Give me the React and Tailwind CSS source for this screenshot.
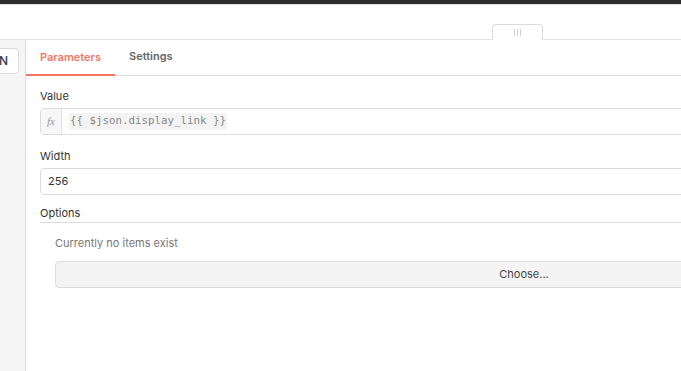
import React from "react";

const Label = ({ children }) => (
  <div className="text-[11px] leading-[16px] text-[#333] mb-[4px]">{children}</div>
);

const App = () => {
  return (
    <div
      className="w-full h-[371px] overflow-hidden bg-white flex flex-col"
      style={{ fontFamily: "Inter, 'Liberation Sans', sans-serif" }}
    >
      <div className="h-[4px] bg-[#2e2e2e] shrink-0" />
      <div className="h-[36px] shrink-0 border-t border-b border-[#e0e0e0] flex items-end pl-[492px]">
        <div className="w-[51px] h-[16px] mb-[-1px] bg-white border border-b-0 border-[#dcdcdc] rounded-t-[4px] flex items-center justify-center gap-[2px]">
          <div className="w-px h-[7px] bg-[#d0d0d0]" />
          <div className="w-px h-[7px] bg-[#d0d0d0]" />
          <div className="w-px h-[7px] bg-[#d0d0d0]" />
        </div>
      </div>

      <div className="flex flex-1 min-h-0">
        <div className="w-[26px] shrink-0 bg-[#f5f5f5] border-r border-[#dcdcdc] pt-[8px] overflow-hidden">
          <div className="w-[40px] ml-[-21px] h-[26px] bg-white border border-[#dcdcdc] rounded-[4px] flex items-center pl-[19px]">
            <span className="text-[12px] font-medium text-[#2d3a4f]">N</span>
          </div>
        </div>

        <div className="w-[996px] shrink-0 flex flex-col">
          <div className="h-[36px] flex items-stretch border-b border-[#dcdcdc]">
            <div className="px-[14px] flex items-center border-b-2 border-[#f47561] mb-[-1px]">
              <span className="text-[11px] font-semibold text-[#f47561]">Parameters</span>
            </div>
            <div className="px-[14px] flex items-center pb-[3px]">
              <span className="text-[11px] font-semibold text-[#666]">Settings</span>
            </div>
          </div>

          <div className="px-[14px] pt-[12px]">
            <Label>Value</Label>
            <div className="h-[27px] flex border border-[#dcdcdc] rounded-[4px] overflow-hidden">
              <div className="w-[21px] shrink-0 bg-[#f7f7f7] border-r border-[#e3e3e3] flex items-center justify-center">
                <span
                  className="text-[11px] italic text-[#999]"
                  style={{ fontFamily: "'Liberation Serif', serif" }}
                >
                  fx
                </span>
              </div>
              <div className="flex items-center pl-[7px]">
                <span
                  className="text-[10.8px] text-[#888] bg-[#f3f3f3] px-[1px]"
                  style={{ fontFamily: "'DejaVu Sans Mono', monospace" }}
                >
                  {"{{ $json.display_link }}"}
                </span>
              </div>
            </div>

            <div className="mt-[13px]">
              <Label>Width</Label>
              <div className="h-[27px] flex items-center border border-[#dcdcdc] rounded-[4px] px-[7px]">
                <span className="text-[11px] text-[#333]">256</span>
              </div>
            </div>

            <div className="mt-[10px]">
              <div className="text-[11px] leading-[16px] text-[#333] pb-[1px] border-b border-[#dcdcdc]">
                Options
              </div>
              <div className="px-[15px] pt-[12px]">
                <div className="text-[11px] leading-[16px] text-[#777]">Currently no items exist</div>
                <div className="mt-[10px] h-[27px] bg-[#f4f4f4] border border-[#dcdcdc] rounded-[4px] flex items-center justify-center">
                  <span className="text-[11px] text-[#444]">Choose...</span>
                </div>
              </div>
            </div>
          </div>
        </div>
      </div>
    </div>
  );
};

export default App;
